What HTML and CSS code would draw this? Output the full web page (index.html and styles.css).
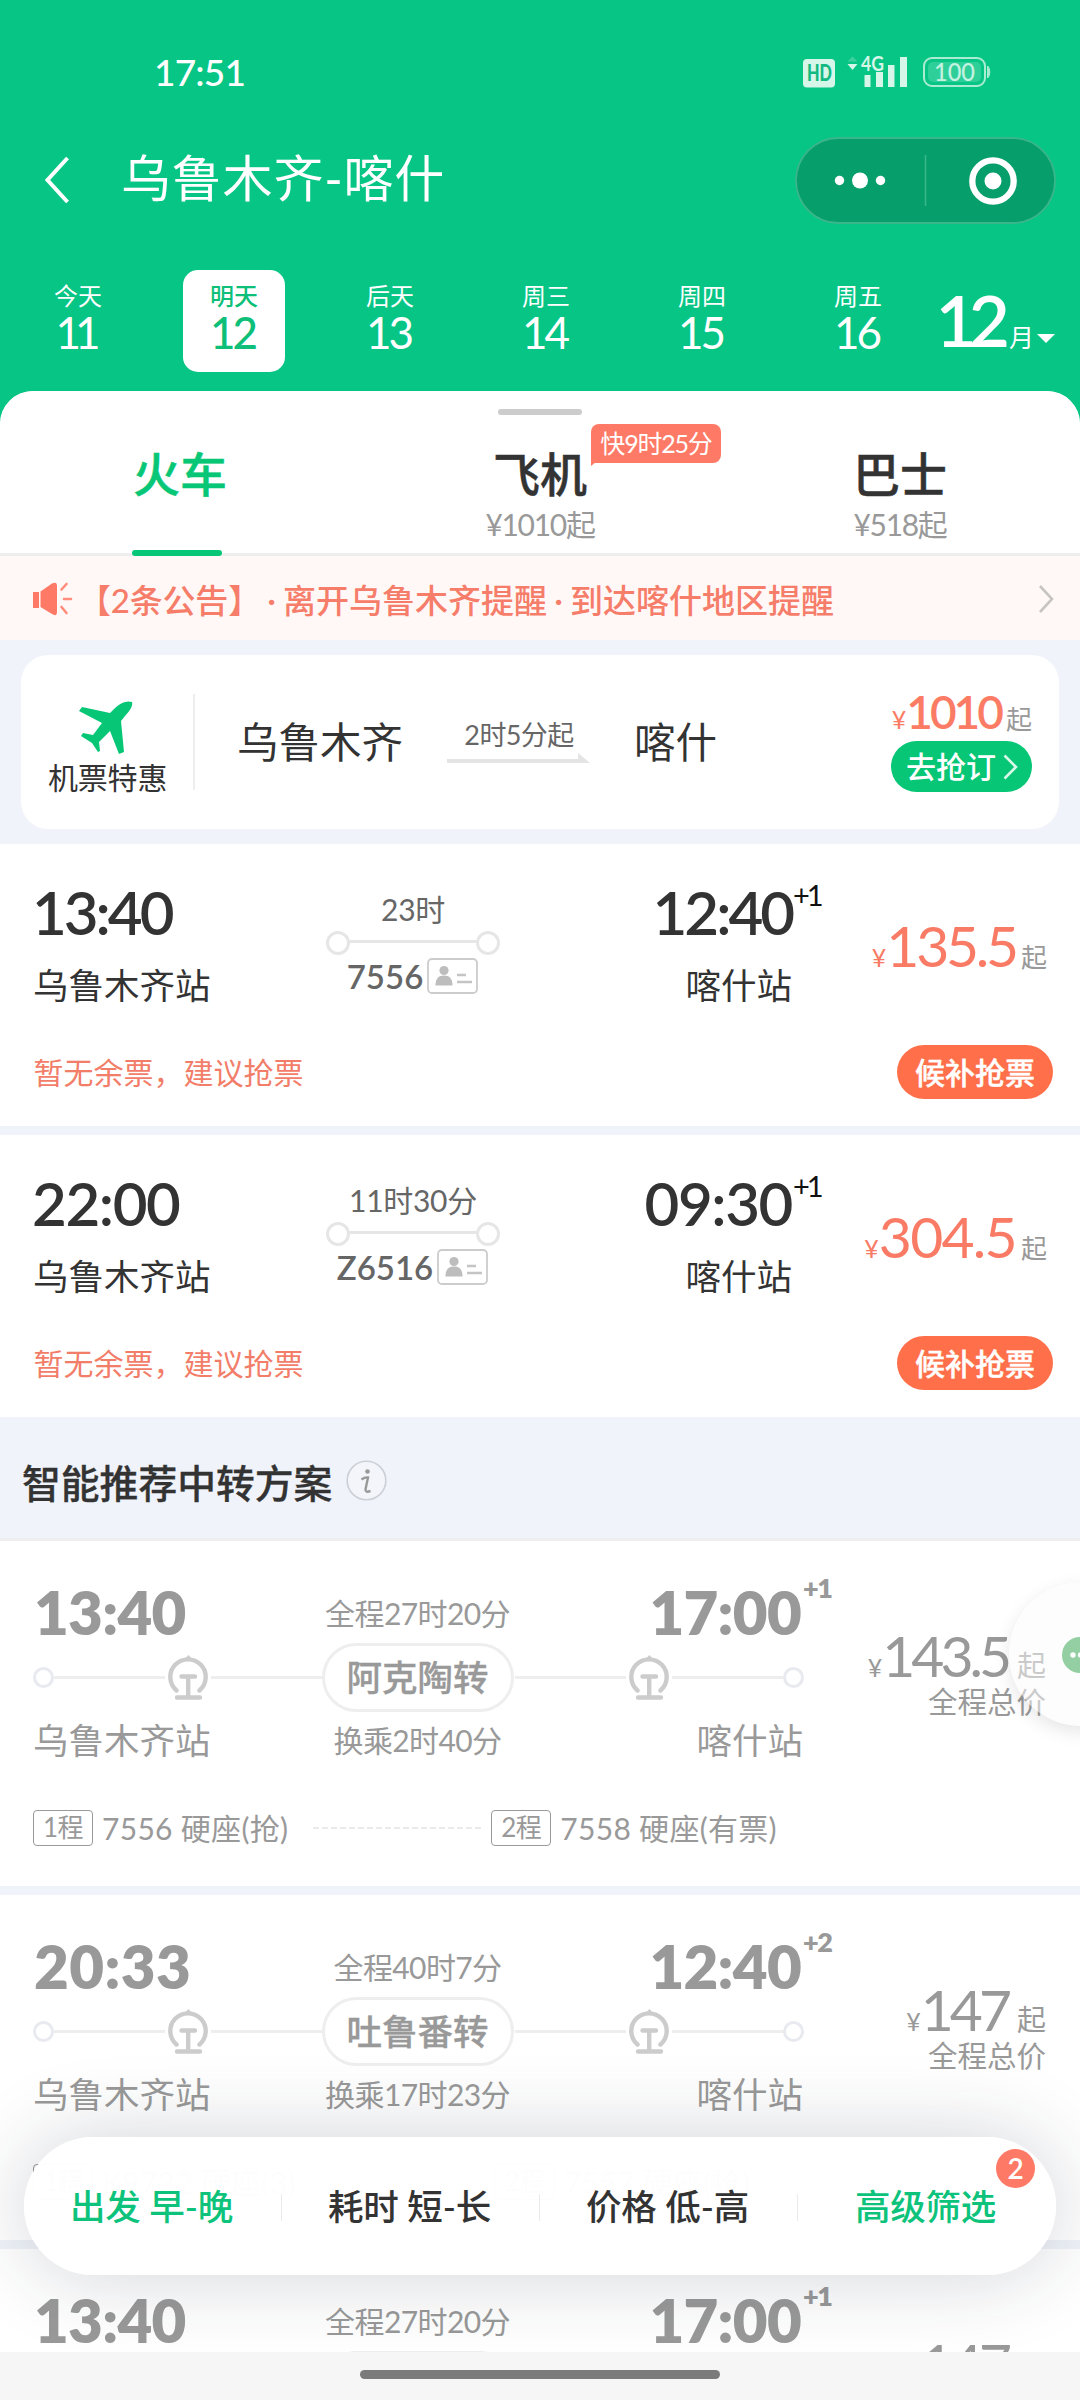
FILE: index.html
```html
<!DOCTYPE html>
<html lang="zh-CN">
<head>
<meta charset="utf-8">
<title>乌鲁木齐-喀什</title>
<link rel="stylesheet" href="styles.css">
</head>
<body>
<svg class="defs" width="0" height="0">
  <symbol id="rail" viewBox="0 0 40 45">
    <g fill="none" stroke="#ccc" stroke-width="4.4" stroke-linecap="round">
      <path d="M8.5 35.5A17.7 17.7 0 1 1 31.5 35.5"/>
      <path d="M13.5 21.500H27M20.200 21.500V42M9 42.500H32"/>
    </g>
    <path d="M16 4.500L20.500 0l4 4.500z" fill="#ccc"/>
  </symbol>
  <symbol id="idcard" viewBox="0 0 51 36">
    <rect x="1" y="1" width="49" height="34" rx="4" fill="#fff" stroke="#ccc" stroke-width="1.8"/>
    <circle cx="17" cy="12.500" r="4.600" fill="#bdbdbd"/>
    <path d="M8.500 27.500c0-7 3-10 8.500-10s8.500 3 8.500 10z" fill="#bdbdbd"/>
    <path d="M30 17h9M30 24h15" stroke="#c4c4c4" stroke-width="2.600"/>
  </symbol>
</svg>
<div class="screen">
  <header class="header">
    <div class="status">
      <span class="clock">17:51</span>
      <svg class="signal" width="190" height="34" viewBox="801 55 190 34">
        <rect x="803" y="59" width="32" height="28.500" rx="4" fill="#d5f6e9"/>
        <text x="807" y="81" class="hd" textLength="25" lengthAdjust="spacingAndGlyphs">HD</text>
        <path d="M847.500 61.500l5-5 5 5z" fill="#3cd09c"/>
        <path d="M847.500 64l5 6 5-6z" fill="#d5f6e9"/>
        <text x="861" y="71" class="net" textLength="23" lengthAdjust="spacingAndGlyphs">4G</text>
        <path d="M864.500 75h6v12h-6zM876 72h7v15h-7zM888 65h6.500v22h-6.500zM900 57h7v30h-7z" fill="#d5f6e9"/>
        <rect x="924" y="58" width="61" height="28" rx="8" fill="none" stroke="#a9ecd2" stroke-width="2"/>
        <rect x="928" y="62" width="53" height="20" rx="5" fill="#2fcf99"/>
        <path d="M987.500 66c3 2 3 10 0 12z" fill="#a9ecd2" stroke="#a9ecd2"/>
        <text x="934" y="81" class="batt" textLength="41" lengthAdjust="spacingAndGlyphs">100</text>
      </svg>
    </div>
    <div class="navbar">
      <svg class="back" width="26" height="48" viewBox="0 0 26 48"><path d="M23.500 2L3.500 24l20 22" fill="none" stroke="#fff" stroke-width="4"/></svg>
      <h1 class="title">乌鲁木齐-喀什</h1>
      <svg class="capsule" width="261" height="87" viewBox="0 0 261 87">
        <rect x="1" y="1" width="259" height="85" rx="42.500" fill="#069e6a" stroke="#39b68a" stroke-width="1.800"/>
        <path d="M130.500 18v51" stroke="#39b68a" stroke-width="1.500"/>
        <g fill="#fff"><circle cx="44.500" cy="43.500" r="4.700"/><circle cx="65" cy="43.500" r="8"/><circle cx="85.500" cy="43.500" r="4.700"/><circle cx="198" cy="44" r="8.500"/></g>
        <circle cx="198" cy="44" r="20.700" fill="none" stroke="#fff" stroke-width="6.300"/>
      </svg>
    </div>
    <div class="dates">
      <div class="day"><span>今天</span><b class="ones">11</b></div>
      <div class="day active"><span>明天</span><b>12</b></div>
      <div class="day"><span>后天</span><b>13</b></div>
      <div class="day"><span>周三</span><b>14</b></div>
      <div class="day"><span>周四</span><b>15</b></div>
      <div class="day"><span>周五</span><b>16</b></div>
      <div class="month"><b>12</b><span>月</span><i class="caret"></i></div>
    </div>
  </header>

  <main class="panel">
    <div class="handle"></div>
    <nav class="tabs">
      <div class="tab on"><strong>火车</strong></div>
      <div class="tab"><strong>飞机</strong><small>¥1010起</small><em class="tag">快9时25分</em></div>
      <div class="tab"><strong>巴士</strong><small>¥518起</small></div>
    </nav>
    <div class="notice">
      <svg width="40" height="36" viewBox="0 0 40 36"><path d="M0 11h6v16H0zM7.500 10.500L19 2.500Q24 0 24 5v26q0 5-5 2L7.500 26z" fill="#ff7a66"/><path d="M28.500 8.500l5-5.500M31 18h7M28.500 26l5 6" stroke="#ff8d7c" stroke-width="2.600" stroke-linecap="round"/></svg>
      <span class="bulletin">【2条公告】</span><span class="dot">·</span><span>离开乌鲁木齐提醒</span><span class="dot">·</span><span>到达喀什地区提醒</span>
      <svg class="more" width="16" height="28" viewBox="0 0 16 28"><path d="M2 1l12 13L2 27" fill="none" stroke="#c8c4c4" stroke-width="2.600"/></svg>
    </div>

    <section class="flight">
      <div class="deal">
        <svg width="54" height="54" viewBox="0 0 54 54"><path d="M53 1C48-1 40 2 34 9L31 12L3 6L0 10L23 22L14 34L4 32L2 35L13 42L19 51L21 50L20 41L31 30L40 53L45 51L42 20L46 15C52 9 54 4 53 1Z" fill="#07c777"/></svg>
        <span>机票特惠</span>
      </div>
      <div class="route">
        <span class="city">乌鲁木齐</span>
        <div class="via"><span>2时5分起</span><svg width="144" height="12" viewBox="0 0 144 12"><path d="M0 7h131V1l12 10H0z" fill="#e4e4e4"/></svg></div>
        <span class="city">喀什</span>
      </div>
      <div class="offer">
        <div class="cost"><i>¥</i><b>1010</b><span>起</span></div>
        <button class="book">去抢订<svg width="15" height="26" viewBox="0 0 15 26"><path d="M1.500 1.500L13 13 1.500 24.500" fill="none" stroke="#d8f8ea" stroke-width="2.600"/></svg></button>
      </div>
    </section>

    <article class="train">
      <div class="trip">
        <div class="end"><b class="time">13:40</b><span class="station">乌鲁木齐站</span></div>
        <div class="ride"><span>23时</span><div class="line"></div><div class="no">7556<svg width="51" height="36"><use href="#idcard"/></svg></div></div>
        <div class="end to"><b class="time">12:40<sup>+1</sup></b><span class="station">喀什站</span></div>
        <div class="fare"><i>¥</i><b>135.5</b><span>起</span></div>
      </div>
      <div class="foot"><span>暂无余票，建议抢票</span><button class="grab">候补抢票</button></div>
    </article>
    <article class="train">
      <div class="trip">
        <div class="end"><b class="time wide">22:00</b><span class="station">乌鲁木齐站</span></div>
        <div class="ride"><span>11时30分</span><div class="line"></div><div class="no">Z6516<svg width="51" height="36"><use href="#idcard"/></svg></div></div>
        <div class="end to"><b class="time wide">09:30<sup>+1</sup></b><span class="station">喀什站</span></div>
        <div class="fare loose"><i>¥</i><b>304.5</b><span>起</span></div>
      </div>
      <div class="foot"><span>暂无余票，建议抢票</span><button class="grab">候补抢票</button></div>
    </article>

    <h2 class="section">智能推荐中转方案
      <svg width="41" height="41" viewBox="0 0 41 41"><circle cx="20.500" cy="20.500" r="19.300" fill="#f3f5fa" stroke="#ccd0d6" stroke-width="1.600"/><circle cx="21.500" cy="11.500" r="2.300" fill="#999"/><path d="M15.500 19.500Q19 17 22 17.500L19.500 29.500Q19 33 24.500 31" fill="none" stroke="#999" stroke-width="2.400"/></svg>
    </h2>

    <article class="plan">
      <div class="plan-top">
        <div class="legs-view">
          <div class="row"><b class="time">13:40</b><span>全程27时20分</span><b class="time">17:00<sup>+1</sup></b></div>
          <div class="track"><i></i><s></s><svg width="40" height="45"><use href="#rail"/></svg><s></s><span>阿克陶转</span><s></s><svg width="40" height="45"><use href="#rail"/></svg><s></s><i></i></div>
          <div class="row low"><span class="station">乌鲁木齐站</span><span>换乘2时40分</span><span class="station">喀什站</span></div>
        </div>
        <div class="total"><div class="fare"><i>¥</i><b>143.5</b><span>起</span></div><span>全程总价</span></div>
      </div>
      <div class="legs"><div class="leg"><em>1程</em>7556 硬座(抢)</div><div class="dash"></div><div class="leg"><em>2程</em>7558 硬座(有票)</div></div>
    </article>
    <article class="plan">
      <div class="plan-top">
        <div class="legs-view">
          <div class="row"><b class="time big">20:33</b><span>全程40时7分</span><b class="time">12:40<sup>+2</sup></b></div>
          <div class="track"><i></i><s></s><svg width="40" height="45"><use href="#rail"/></svg><s></s><span>吐鲁番转</span><s></s><svg width="40" height="45"><use href="#rail"/></svg><s></s><i></i></div>
          <div class="row low"><span class="station">乌鲁木齐站</span><span>换乘17时23分</span><span class="station">喀什站</span></div>
        </div>
        <div class="total"><div class="fare"><i>¥</i><b>147</b><span>起</span></div><span>全程总价</span></div>
      </div>
      <div class="legs"><div class="leg"><em>1程</em>K9722 硬座(3)</div><div class="dash short"></div><div class="leg"><em>2程</em>7557 硬座(抢)</div></div>
    </article>
    <article class="plan">
      <div class="plan-top">
        <div class="legs-view">
          <div class="row"><b class="time">13:40</b><span>全程27时20分</span><b class="time">17:00<sup>+1</sup></b></div>
          <div class="track"><i></i><s></s><svg width="40" height="45"><use href="#rail"/></svg><s></s><span></span><s></s><svg width="40" height="45"><use href="#rail"/></svg><s></s><i></i></div>
        </div>
        <div class="total"><div class="fare"><i>¥</i><b>147</b><span>起</span></div></div>
      </div>
    </article>
  </main>

  <div class="chat"><svg width="72" height="144" viewBox="0 0 72 144"><circle cx="71" cy="73" r="18" fill="#93cfa3"/><circle cx="64" cy="73" r="2.700" fill="#fff"/><circle cx="71.500" cy="73" r="2.700" fill="#fff"/></svg></div>

  <div class="filters">
    <div class="filter on">出发 早-晚</div>
    <div class="filter">耗时 短-长</div>
    <div class="filter">价格 低-高</div>
    <div class="filter on">高级筛选</div>
    <span class="count">2</span>
  </div>
  <div class="homebar"><i></i></div>
</div>
</body>
</html>
```

FILE: styles.css
```css
* { box-sizing: border-box; }
body {
  margin: 0;
  font-family: Lato, "Noto Sans CJK SC", sans-serif;
  color: #333;
  background: #f6f6f6;
}
i, em { font-style: normal; }
b, strong, h1, h2 { font-weight: 400; margin: 0; }
button { border: 0; font-family: inherit; padding: 0; }
svg { display: block; flex: none; }
.defs { position: absolute; }
.screen {
  position: relative;
  width: 1080px;
  height: 2400px;
  overflow: hidden;
  background: #07c585;
  white-space: nowrap;
}

/* header */
.header { height: 391px; }
.status { display: flex; justify-content: space-between; padding: 55px 89px 0 154px; height: 137px; }
.clock { font-size: 37px; line-height: 34px; font-weight: 500; letter-spacing: -0.8px; color: #fff; }
.hd { font: 900 22px Lato; fill: #12b981; }
.net { font: 700 21px Lato; fill: #d5f6e9; }
.batt { font: 500 24px Lato; fill: #c5f2e1; }
.navbar { display: flex; align-items: center; height: 87px; padding: 0 24px 0 44px; }
.back { margin-top: -2px; }
.title { flex: 1; margin: -5px 0 0 51px; font-size: 50px; line-height: 60px; letter-spacing: 0.8px; color: #fff; }
.dates { display: flex; height: 167px; padding: 46px 25px 0 27px; color: #fff; }
.day {
  width: 102px; height: 102px; margin-right: 54px; flex: none;
  display: flex; flex-direction: column; align-items: center;
  padding-top: 12px; border-radius: 15px;
}
.day span { font-size: 24px; line-height: 28px; }
.day b { font-size: 44px; line-height: 44px; margin-top: 0; letter-spacing: -3px; padding-right: 3px; }
.day .ones { letter-spacing: -6px; padding-right: 6px; }
.day.active { background: #fff; color: #0dbf78; }
.day.active span, .day.active b { font-weight: 500; }
.day:nth-child(6) { margin-right: 0; }
.month { display: flex; flex: 1; justify-content: flex-end; align-items: baseline; }
.month b { font-size: 71px; line-height: 100px; font-weight: 600; letter-spacing: -8px; }
.month span { font-size: 25px; margin-left: 7px; }
.caret { border: 9px solid transparent; border-top: 9px solid #fff; border-bottom: 0; margin-left: 3px; position: relative; top: -4px; }

/* panel */
.panel { height: 1961px; overflow: hidden; border-radius: 33px 33px 0 0; background: #f0f3f9; }
.handle { height: 24px; padding-top: 18px; background: #fff; }
.handle::after { content: ""; display: block; width: 84px; height: 6px; border-radius: 3px; margin: 0 auto; background: #ccc; }
.tabs { display: flex; height: 141px; background: #fff; border-bottom: 3px solid #eee; }
.tab { position: relative; width: 360px; text-align: center; padding-top: 31px; }
.tab strong { display: block; font-size: 47px; line-height: 56px; font-weight: 500; -webkit-text-stroke: 0.5px currentColor; }
.tab small { display: block; font-size: 30px; line-height: 36px; margin-top: 4px; color: #999; letter-spacing: -1.300px; }
.tab.on strong { color: #07c777; }
.tab.on::after { content: ""; position: absolute; left: 132px; bottom: -3px; width: 90px; height: 6px; border-radius: 3px; background: #07c777; }
.tag {
  position: absolute; left: 231px; top: 9px; width: 130px; height: 39px; z-index: 1;
  border-radius: 8px 8px 8px 0; background: #ff7a66; color: #fff;
  font-size: 25px; line-height: 38px; letter-spacing: -1.200px;
}
.tag::after { content: ""; position: absolute; left: 0; top: 38px; border-top: 4px solid #ff7a66; border-right: 5px solid transparent; }
.notice {
  display: flex; align-items: center; height: 84px; padding: 1px 26px 0 33px; background: #fff8f7;
  font-size: 33px; font-weight: 500; color: #f67d6a;
}
.bulletin { margin-left: 5px; width: 184px; letter-spacing: -0.2px; }
.dot { width: 23px; text-align: center; }
.bulletin + .dot { margin-left: -2px; }
.more { margin-left: auto; }

.flight {
  display: flex; height: 174px; margin: 15px 21px; border-radius: 27px; background: #fff;
}
.deal { width: 174px; margin: 39px 0; height: 96px; border-right: 2px solid #eee; position: relative; }
.deal svg { margin: 7px 0 0 58px; }
.deal span { display: block; margin-left: 27px; font-size: 30px; line-height: 36px; margin-top: 4px; letter-spacing: -0.2px; }
.route { display: flex; align-items: center; padding-left: 42px; }
.city { font-size: 41.500px; line-height: 50px; }
.via { width: 144px; margin: 0 43px 0 44px; padding-bottom: 4px; text-align: center; color: #666; font-size: 27px; line-height: 32px; letter-spacing: -0.6px; }
.via span { position: relative; top: 2px; }
.via svg { margin-top: 3px; }
.offer { margin-left: auto; padding: 35px 27px 0 0; display: flex; flex-direction: column; align-items: flex-end; }
.cost { display: flex; align-items: baseline; color: #fb7b65; height: 51px; line-height: 44px; }
.cost i { font-size: 25px; }
.cost b { font-size: 46px; font-weight: 600; letter-spacing: -3px; }
.cost span { font-size: 26px; color: #999; margin-left: 5px; }
.book {
  display: flex; align-items: center; width: 141px; height: 51px; padding-left: 15px; border-radius: 26px;
  background: #07c777; color: #fff; font-size: 30px; font-weight: 500; line-height: 51px;
}
.book svg { margin-left: 7px; }

/* direct trains */
.train { height: 282px; margin-bottom: 9px; padding: 39px 27px 0 35px; background: #fff; }
.trip { display: flex; height: 162px; padding-right: 6px; }
.end { width: 291px; }
.end.to { text-align: right; }
.time { position: relative; display: block; font-size: 60px; line-height: 60px; font-weight: 600; letter-spacing: -3px; margin-left: -3px; top: -1px; }
.end.to .time { margin-right: -1px; }
.time.wide { letter-spacing: -1.400px; }
.time sup { position: absolute; left: 100%; margin-left: 1px; top: -9px; font-size: 29px; line-height: 44px; font-weight: 400; color: #111; letter-spacing: -3px; }
.station { display: block; font-size: 35.500px; line-height: 40px; margin: 23px 0 0 -2px; }
.end.to .station { margin-right: -1px; }
.ride { width: 174px; padding-top: 9px; display: flex; flex-direction: column; align-items: center; color: #666; }
.ride span { font-size: 30px; line-height: 34px; letter-spacing: -0.3px; }
.line { width: 174px; height: 18px; margin: 8px 0 6px; display: flex; align-items: center; justify-content: space-between;
  background: linear-gradient(#e6e6e6, #e6e6e6) 18px 6px / 138px 3px no-repeat; }
.line::before, .line::after { content: ""; width: 18px; height: 18px; border: 3px solid #e6e6e6; border-radius: 50%; background: #fff; }
.no { display: flex; gap: 4px; font-size: 33px; line-height: 36px; font-weight: 600; margin-left: -1px; }
.fare { display: flex; flex: 1; justify-content: flex-end; align-items: baseline; height: 60px; line-height: 60px; color: #f97b66; margin-top: 32px; }
.fare i { font-size: 25px; }
.fare b { font-size: 57px; letter-spacing: -3.200px; }
.fare.loose b { letter-spacing: -1.700px; }
.fare span { font-size: 26px; color: #999; margin-left: 5px; }
.foot { display: flex; justify-content: space-between; color: #f27d69; font-size: 30px; line-height: 55px; height: 54px; }
.foot span { margin-left: -1.500px; }
.grab { width: 156px; height: 54px; border-radius: 27px; background: #ff6f4a; color: #fff; font-size: 30px; font-weight: 500; line-height: 52px; -webkit-text-stroke: 0.4px #fff; }

/* transfer plans */
.section {
  display: flex; align-items: center; gap: 14px; height: 124px; margin-top: -9px; padding: 6px 0 0 22px;
  border-bottom: 3px solid #eee; font-size: 38.800px; font-weight: 500; -webkit-text-stroke: 0.3px currentColor;
}
.plan { height: 345px; margin-bottom: 9px; padding: 42px 34px 0 33px; background: #fff; color: #999; }
.plan-top { display: flex; height: 227px; }
.legs-view { width: 771px; }
.row { display: grid; grid-template-columns: 1fr 192px 1fr; height: 60px; justify-items: center; }
.row > :first-child { justify-self: start; margin-left: 1px; }
.row > :last-child { justify-self: end; margin-right: 1px; }
.row > span:nth-child(2) { font-size: 30px; line-height: 61px; letter-spacing: -0.6px; margin-left: -2px; }
.row.low { height: 40px; margin-top: 9px; }
.row.low > span:nth-child(2) { line-height: 39px; }
.row .station { margin-top: 0; }
.row .station:first-child { margin-left: 0; }
.plan .time { font-weight: 800; letter-spacing: -0.700px; }
.plan .time.big { letter-spacing: 0.400px; }
.row > .time:last-child { margin-right: 3px; }
.plan .time sup { color: #999; font-weight: 800; font-size: 27px; top: -16px; margin-left: 2px; letter-spacing: -1.500px; }
.track { display: flex; align-items: center; height: 69px; }
.track i { width: 21px; height: 21px; border: 3px solid #e8eaef; border-radius: 50%; }
.track s { flex: 1; height: 3px; background: #eee; }
.track svg { margin: 0 3px; }
.track span { width: 192px; height: 69px; border: 3px solid #eee; border-radius: 35px; text-align: center; font-size: 35.500px; line-height: 64px; font-weight: 500; -webkit-text-stroke: 0.3px currentColor; margin: 0 1px 0 -1px; }
.total { flex: 1; padding-top: 42px; text-align: right; font-size: 29.500px; line-height: 34px; }
.total .fare { color: #999; margin: 0; }
.total .fare b { letter-spacing: -4px; }
.total .fare span { font-size: 29px; margin-left: 9px; }
.legs { display: flex; align-items: center; font-size: 30px; line-height: 36px; }
.leg { display: flex; letter-spacing: 0.3px; }
.leg em { width: 60px; height: 36px; border: 1.500px solid #999; border-radius: 4px; margin-right: 9px; text-align: center; font-size: 26px; line-height: 33px; letter-spacing: -0.5px; }
.dash { width: 170px; height: 2px; margin: 0 8px 0 25px; background: repeating-linear-gradient(90deg, #eaeaea 0 6px, transparent 6px 9px); }
.dash.short { width: 166px; }

/* floating pieces */
.chat {
  position: absolute; left: 1009px; top: 1582px; width: 144px; height: 144px; border-radius: 50%;
  background: rgba(252, 252, 252, 0.5); box-shadow: 0 6px 18px rgba(0, 0, 0, 0.1);
}
.filters {
  position: absolute; left: 24px; top: 2137px; width: 1032px; height: 138px; border-radius: 69px;
  display: flex; align-items: center; background: rgba(255, 255, 255, 0.98);
  box-shadow: 0 0 84px rgba(30, 40, 60, 0.2);
}
.filter { flex: 1; text-align: center; font-size: 35.500px; line-height: 44px; font-weight: 500; margin-top: 2px; padding-right: 3px; letter-spacing: -0.2px; }
.filter.on { color: #0dc37c; }
.filter:not(:nth-child(4)) { background: linear-gradient(#eaeaea, #eaeaea) right center / 1.500px 27px no-repeat; }
.count { position: absolute; left: 972px; top: 12px; width: 39px; height: 39px; border-radius: 50%; background: #ff7a66; color: #fff; text-align: center; font-size: 28px; line-height: 38px; font-weight: 600; }
.homebar { position: absolute; left: 0; bottom: 0; width: 1080px; height: 48px; padding-top: 18px; background: #f6f6f6; }
.homebar i { display: block; width: 360px; height: 9px; margin: 0 auto; border-radius: 5px; background: #7b7b7b; }
```
